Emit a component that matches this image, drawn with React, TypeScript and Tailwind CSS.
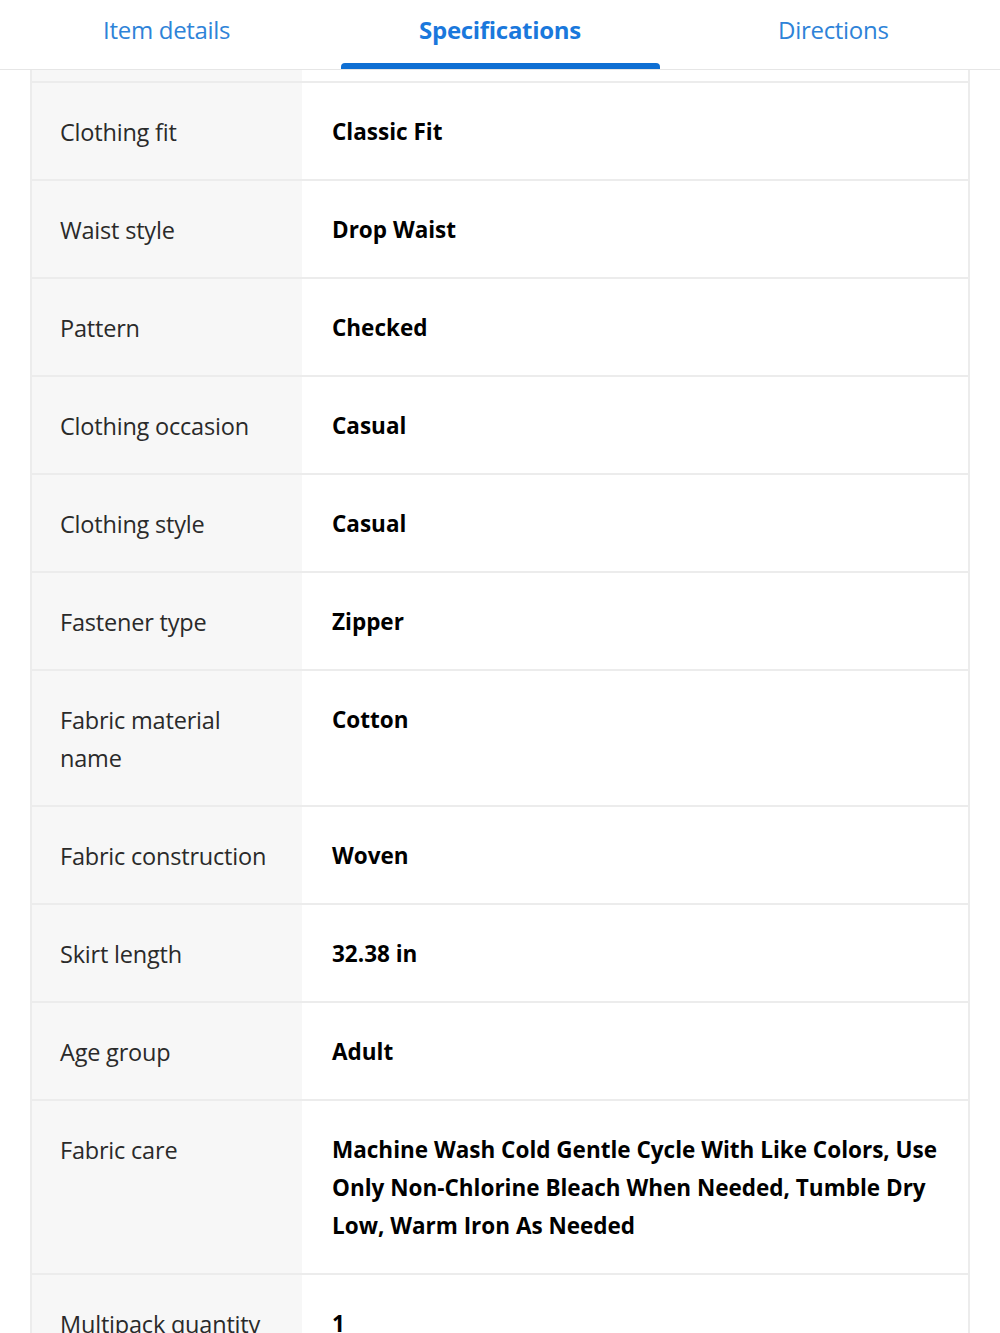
import React from 'react';

interface SpecRow {
  label: string;
  value: string;
}

const specs: SpecRow[] = [
  { label: 'Clothing fit', value: 'Classic Fit' },
  { label: 'Waist style', value: 'Drop Waist' },
  { label: 'Pattern', value: 'Checked' },
  { label: 'Clothing occasion', value: 'Casual' },
  { label: 'Clothing style', value: 'Casual' },
  { label: 'Fastener type', value: 'Zipper' },
  { label: 'Fabric material name', value: 'Cotton' },
  { label: 'Fabric construction', value: 'Woven' },
  { label: 'Skirt length', value: '32.38 in' },
  { label: 'Age group', value: 'Adult' },
  {
    label: 'Fabric care',
    value:
      'Machine Wash Cold Gentle Cycle With Like Colors, Use Only Non-Chlorine Bleach When Needed, Tumble Dry Low, Warm Iron As Needed',
  },
  { label: 'Multipack quantity', value: '1' },
];

const tabs = ['Item details', 'Specifications', 'Directions'];

export default function App() {
  const active = 1;

  return (
    <div className="w-[1000px] h-[1333px] overflow-hidden bg-white font-['Open_Sans',sans-serif]">
      {/* Tabs */}
      <div className="grid grid-cols-3 h-[70px] border-b border-[#e6e6e6]">
        {tabs.map((tab, i) => (
          <div key={tab} className="relative flex justify-center pt-[13px]">
            <span
              className={`text-[24px] leading-[34px] tracking-[-0.3px] ${
                i === active ? 'font-bold text-[#1a78dc]' : 'text-[#2e83d8]'
              }`}
            >
              {tab}
            </span>
            {i === active && (
              <div className="absolute bottom-0 left-[8px] right-[7px] h-[6px] rounded-t-[4px] bg-[#0f6fd3]" />
            )}
          </div>
        ))}
      </div>

      {/* Table */}
      <div className="mx-[30px] border-x-2 border-[#ececec]">
        <div className="grid grid-cols-[270px_1fr] h-[13px] border-b-2 border-[#ececec]">
          <div className="bg-[#f7f7f7]" />
          <div />
        </div>
        {specs.map((row) => (
          <div key={row.label} className="grid grid-cols-[270px_1fr] border-b-2 border-[#ececec]">
            <div className="bg-[#f7f7f7] pl-[28px] pr-[20px] pt-[30px] pb-[28px] text-[23.5px] leading-[38px] text-[#2a2a2a] tracking-[-0.2px]">
              {row.label}
            </div>
            <div className="pl-[30px] pr-[14px] pt-[30px] pb-[28px] text-[22.5px] leading-[38px] font-bold text-black">
              {row.value}
            </div>
          </div>
        ))}
      </div>
    </div>
  );
}
